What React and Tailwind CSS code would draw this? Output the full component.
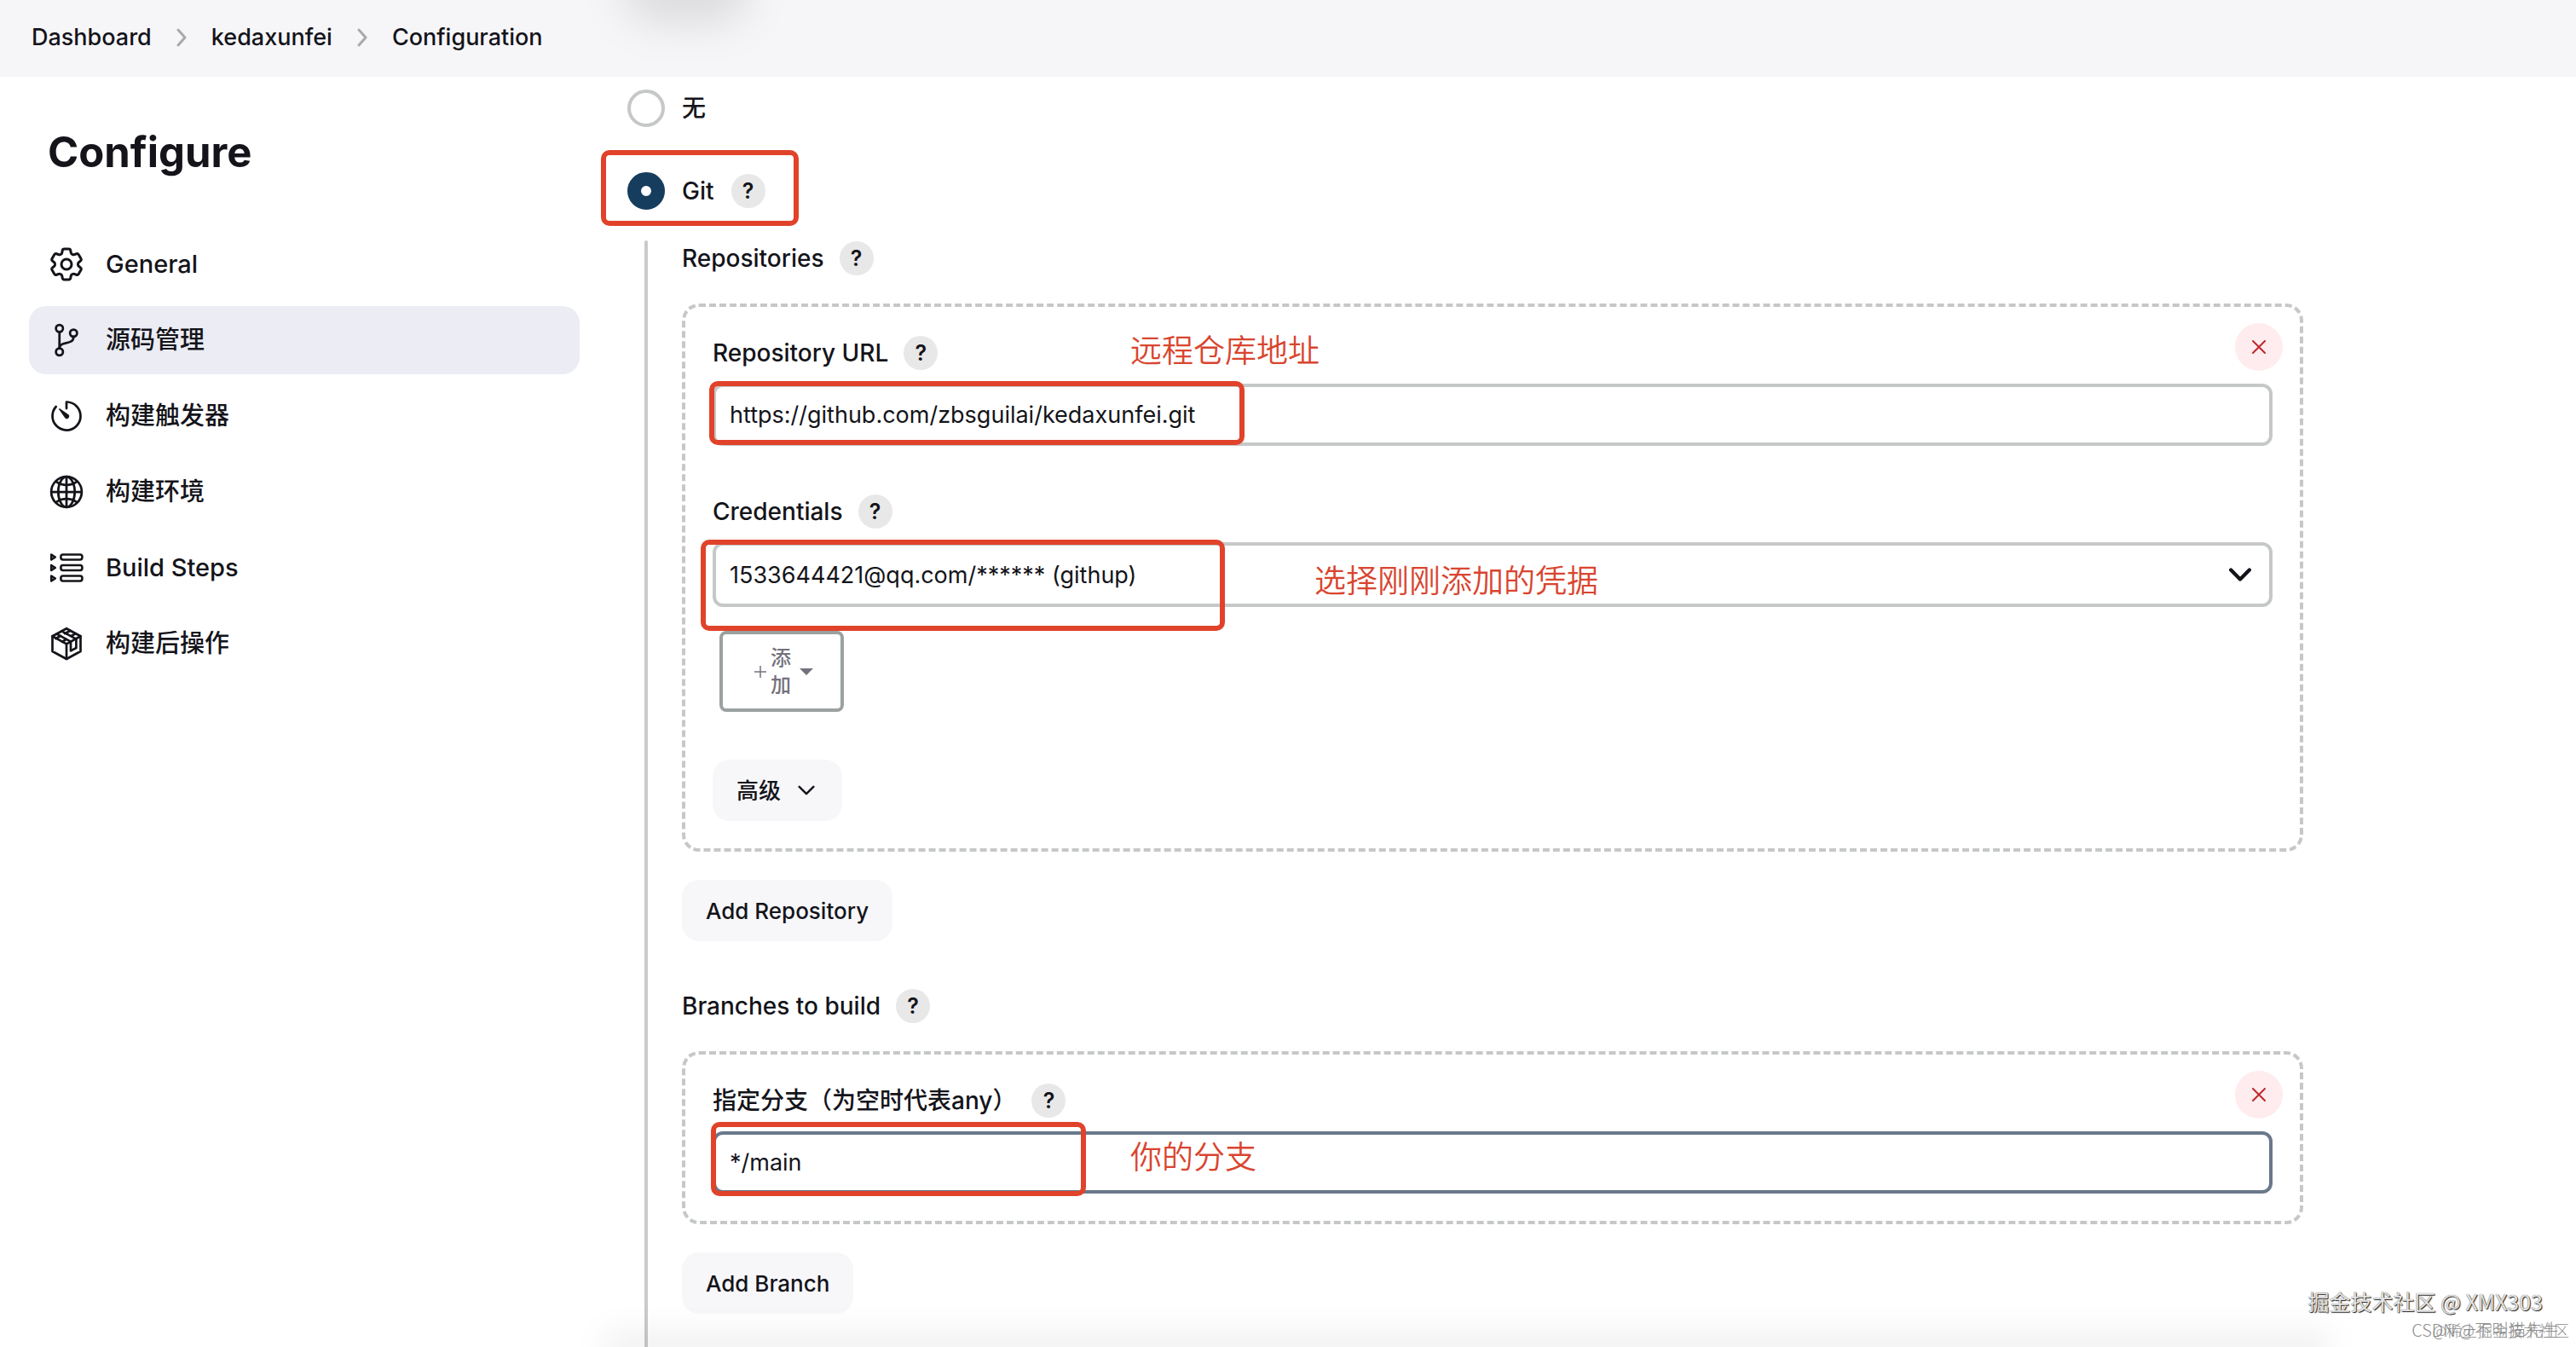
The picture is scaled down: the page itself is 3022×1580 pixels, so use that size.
import React from "react";
import {
  IoGitBranchOutline,
  IoTimerOutline,
  IoGlobeOutline,
} from "react-icons/io5";
import { HiOutlineCog6Tooth } from "react-icons/hi2";

function StepsIcon({ className }) {
  return (
    <svg viewBox="0 0 44 44" fill="none" stroke="currentColor" strokeWidth="2.6" strokeLinejoin="round" className={className}>
      {[9.5, 22, 34.5].map((y) => (
        <g key={y}>
          <path d={`M4.2 ${y - 3}v6l4.6 -3z`} />
          <rect x="15.4" y={y - 3} width="25" height="6" rx="2.4" />
        </g>
      ))}
    </svg>
  );
}

function PackageIcon({ className }) {
  return (
    <svg viewBox="0 0 44 44" fill="none" stroke="currentColor" strokeWidth="2.7" strokeLinejoin="round" strokeLinecap="round" className={className}>
      <path d="M22 4.2 38.5 13.2V31L22 40 5.5 31V13.2Z" />
      <path d="M5.5 13.2 22 22.4 38.5 13.2M22 22.4V40" />
      <path d="M10.6 10.6 27 19.6M16.4 7.4 33 16.4" />
      <path d="M9.5 16 15 12.8M20 10.2 26.5 6.8M17 19.8 21.4 17M28 12.8 32 10.6" />
      <path d="M27 19.8V30.4L33.4 27V16.4" />
    </svg>
  );
}

function Chevron({ className, width = 3 }) {
  return (
    <svg viewBox="0 0 24 24" fill="none" stroke="currentColor" strokeWidth={width} strokeLinecap="round" strokeLinejoin="round" className={className}>
      <path d="M2 7 12 17 22 7" />
    </svg>
  );
}

function Crumbs() {
  return (
    <header className="relative h-[90px] overflow-hidden bg-[#f6f6f9]">
      <div className="absolute -top-14 left-[730px] h-[84px] w-[150px] rounded-full bg-black/10 blur-xl" />
      <nav aria-label="Breadcrumb" className="flex h-[88px] items-center gap-[29px] px-[37px] text-[27px] font-medium">
        <a href="#dashboard">Dashboard</a>
        <Separator />
        <a href="#project">kedaxunfei</a>
        <Separator />
        <a href="#configuration">Configuration</a>
      </nav>
    </header>
  );
}

function Separator() {
  return (
    <svg viewBox="0 0 12 22" fill="none" stroke="#a9a9ad" strokeWidth="3" strokeLinecap="round" strokeLinejoin="round" className="h-[22px] w-3">
      <path d="M2 2 10 11 2 20" />
    </svg>
  );
}

const sections = [
  { label: "General", Icon: HiOutlineCog6Tooth, icon: "size-12 -m-0.5" },
  { label: "源码管理", Icon: IoGitBranchOutline, icon: "size-11", active: true },
  { label: "构建触发器", Icon: IoTimerOutline, icon: "size-11" },
  { label: "构建环境", Icon: IoGlobeOutline, icon: "size-11" },
  { label: "Build Steps", Icon: StepsIcon, icon: "size-11" },
  { label: "构建后操作", Icon: PackageIcon, icon: "size-11" },
];

function Sidebar() {
  return (
    <aside className="w-[736px] shrink-0 pt-[59px] pr-14 pl-[34px]">
      <h1 className="pl-[22px] text-[49px] leading-[60px] font-bold">Configure</h1>
      <nav aria-label="Sections" className="mt-[61px] flex flex-col gap-[9px]">
        {sections.map(({ label, Icon, icon, active }) => (
          <a
            key={label}
            href={`#${label}`}
            className={`flex h-20 items-center gap-6 rounded-[20px] px-[22px] text-[29px] font-medium ${active ? "bg-[#ebecf4]" : ""}`}
          >
            <Icon className={icon} />
            {label}
          </a>
        ))}
      </nav>
    </aside>
  );
}

function Help({ topic }) {
  return (
    <button
      type="button"
      aria-label={`Help for ${topic}`}
      className="flex size-10 items-center justify-center rounded-full bg-[#e8e8e8] text-[25px] leading-none font-semibold"
    >
      ?
    </button>
  );
}

function Label({ children, htmlFor }) {
  const Tag = htmlFor ? "label" : "span";
  return (
    <div className="flex h-10 items-center gap-[18px] text-[28px] font-medium">
      <Tag htmlFor={htmlFor}>{children}</Tag>
      <Help topic={children} />
    </div>
  );
}

function Mark({ className }) {
  return <span className={`pointer-events-none absolute rounded-[10px] border-[6px] border-[#e0432a] ${className}`} />;
}

function Note({ className, children }) {
  return (
    <span className={`pointer-events-none absolute text-[37px] leading-[44px] font-[350] whitespace-nowrap text-[#d9452f] ${className}`}>
      {children}
    </span>
  );
}

function Choice({ id, label, checked, children }) {
  return (
    <div className="flex h-11 items-center gap-5">
      <input
        id={id}
        type="radio"
        name="scm"
        defaultChecked={checked}
        className="size-11 shrink-0 appearance-none rounded-full border-4 border-[#c6c8c8] bg-white checked:border-[16px] checked:border-[#163d5e]"
      />
      <label htmlFor={id} className="text-[28px] font-medium">{label}</label>
      {children}
    </div>
  );
}

function Panel({ children }) {
  return (
    <section className="relative mt-[33px] rounded-[20px] border-4 border-dashed border-[#c6c8c8] px-8 pt-[34px] pb-8">
      <button
        type="button"
        aria-label="Delete"
        className="absolute top-[19px] right-5 flex size-14 items-center justify-center rounded-full bg-[#ffecee] text-[#c0282c]"
      >
        <svg viewBox="0 0 16 16" fill="none" stroke="currentColor" strokeWidth="2" strokeLinecap="round" className="size-4">
          <path d="M1 1 15 15M15 1 1 15" />
        </svg>
      </button>
      {children}
    </section>
  );
}

function SoftButton({ children, className }) {
  return (
    <button type="button" className={`flex h-[72px] items-center rounded-[20px] bg-[#f7f7fa] pl-7 text-[26px] font-medium ${className}`}>
      {children}
    </button>
  );
}

function Content() {
  return (
    <main className="flex min-w-0 grow flex-col pt-[15px] pr-80 text-[27px]">
      <Choice id="scm-none" label="无" />
      <div className="relative mt-[53px]">
        <Choice id="scm-git" label="Git" checked>
          <Help topic="Git" />
        </Choice>
        <Mark className="-top-[26px] -left-[31px] h-[89px] w-[232px]" />
      </div>

      <div className="mt-9 flex grow gap-5">
        <div className="flex w-11 shrink-0 justify-center">
          <div className="w-1 rounded-t-full bg-[#c9cbcb]" />
        </div>
        <div className="min-w-0 grow pt-px pb-9">
          <Label>Repositories</Label>
          <Panel>
            <Label htmlFor="repo-url">Repository URL</Label>
            <Note className="top-[30px] left-[522px]">远程仓库地址</Note>
            <div className="relative mt-4">
              <input
                id="repo-url"
                defaultValue="https://github.com/zbsguilai/kedaxunfei.git"
                className="block h-[73px] w-full rounded-xl border-4 border-[#c6c8c8] bg-white px-4"
              />
              <Mark className="-top-[3px] -left-1 h-[75px] w-[628px]" />
            </div>

            <div className="mt-[57px]">
              <Label htmlFor="credentials">Credentials</Label>
            </div>
            <div className="relative mt-4">
              <select id="credentials" className="block h-[76px] w-full appearance-none rounded-xl border-4 border-[#c6c8c8] bg-white px-4 pt-0.5">
                <option>1533644421@qq.com/****** (githup)</option>
              </select>
              <Chevron className="pointer-events-none absolute top-[25px] right-[25px] size-[26px]" width={4} />
              <Mark className="-top-[3px] -left-[14px] h-[107px] w-[615px]" />
              <Note className="top-6 left-[706px]">选择刚刚添加的凭据</Note>
            </div>

            <button
              type="button"
              className="mt-7 ml-2 flex h-[95px] w-[146px] items-center justify-center rounded-lg border-4 border-[#9ba1a1] pl-1 text-[24px] leading-8 font-medium text-[#74727c]"
            >
              <svg viewBox="0 0 16 16" stroke="currentColor" strokeWidth="1.5" className="size-4">
                <path d="M8 1V15M1 8H15" />
              </svg>
              <span className="mr-[10px] ml-1 w-6">添加</span>
              <svg viewBox="0 0 16 8" fill="currentColor" className="h-2 w-4">
                <path d="M0 0H16L8 8Z" />
              </svg>
            </button>

            <SoftButton className="mt-14 gap-5 pr-8">
              高级
              <Chevron className="size-5" />
            </SoftButton>
          </Panel>
          <SoftButton className="mt-[33px] pr-7">Add Repository</SoftButton>

          <div className="mt-14">
            <Label>Branches to build</Label>
          </div>
          <Panel>
            <Label htmlFor="branch">指定分支（为空时代表any）</Label>
            <div className="relative mt-4">
              <input
                id="branch"
                defaultValue="*/main"
                className="block h-[73px] w-full rounded-xl border-4 border-[#69798a] bg-white px-4"
              />
              <Mark className="-top-[11px] -left-[2px] h-[87px] w-[440px]" />
              <Note className="top-[9px] left-[490px]">你的分支</Note>
            </div>
          </Panel>
          <SoftButton className="mt-[33px] pr-7">Add Branch</SoftButton>
        </div>
      </div>
    </main>
  );
}

export default function App() {
  return (
    <div className="relative flex min-h-screen flex-col overflow-hidden bg-white font-['Inter','Noto_Sans_CJK_SC',sans-serif] text-[#14141a]">
      <Crumbs />
      <div className="flex grow">
        <Sidebar />
        <Content />
      </div>
      <div className="pointer-events-none absolute right-[290px] -bottom-5 left-[710px] h-10 bg-black/5 blur-lg" />
      <footer className="pointer-events-none absolute right-2 bottom-1 font-['Noto_Sans_CJK_SC',sans-serif]">
        <p className="mr-[31px] text-right text-[25px] leading-[36px] text-[#e4e4e4] [text-shadow:1px_1px_1px_#222,0_0_1px_#444]">
          掘金技术社区 @ XMX303
        </p>
        <div className="relative h-8 leading-8 font-light text-[#8e8e8e]">
          <p className="absolute top-0 right-[11px] text-[20px] whitespace-nowrap">CSDN @不叫猫先生</p>
          <p className="absolute top-0 right-0 text-[18px] whitespace-nowrap">@稀土掘金技术社区</p>
        </div>
      </footer>
    </div>
  );
}
